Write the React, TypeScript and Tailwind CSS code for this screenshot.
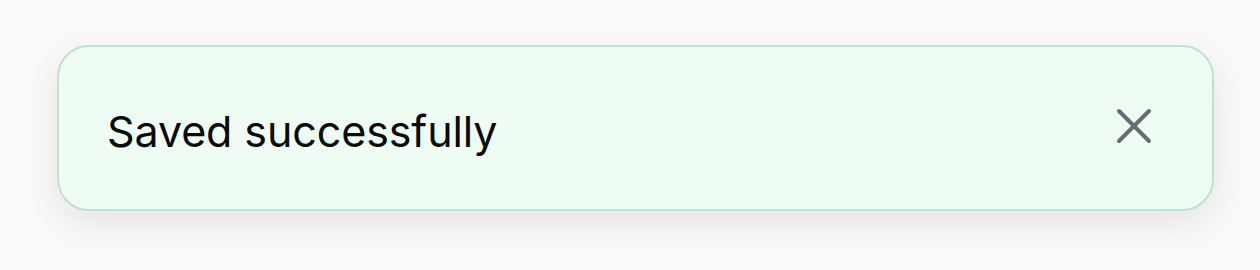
export default function App() {
  return (
    <div className="min-h-[270px] w-full bg-[#f9f9f9] pt-[45px] pl-[57px]">
      <div
        className="flex h-[166px] w-[1157px] items-center justify-between rounded-[32px] border-2 border-[#bde3c9] bg-[#effcf3] pl-[48px] pr-[48px] shadow-[0_12px_36px_rgba(0,0,0,0.09)]"
        style={{ fontFamily: "Inter, 'Noto Sans', sans-serif" }}
      >
        <span className="mt-[7px] text-[43px] leading-none tracking-[-0.1px] text-[#0a0a0a]">
          Saved successfully
        </span>
        <button type="button" aria-label="Close" className="mb-[4px] text-[#6b6b73]">
          <svg width="60" height="60" viewBox="0 0 24 24" fill="none" stroke="currentColor" strokeWidth="1.6" strokeLinecap="round">
            <path d="M18 6 6 18" />
            <path d="m6 6 12 12" />
          </svg>
        </button>
      </div>
    </div>
  );
}
